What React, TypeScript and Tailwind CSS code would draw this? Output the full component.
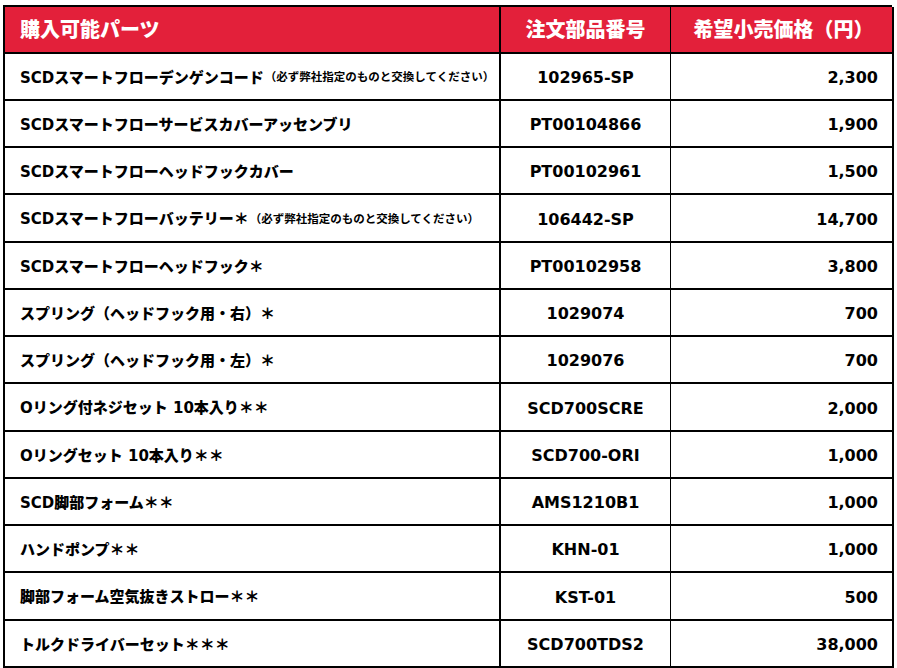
const parts: { name: string; note?: string; code: string; price: string }[] = [
  { name: 'SCDスマートフローデンゲンコード', note: '（必ず弊社指定のものと交換してください）', code: '102965-SP', price: '2,300' },
  { name: 'SCDスマートフローサービスカバーアッセンブリ', code: 'PT00104866', price: '1,900' },
  { name: 'SCDスマートフローヘッドフックカバー', code: 'PT00102961', price: '1,500' },
  { name: 'SCDスマートフローバッテリー＊', note: '（必ず弊社指定のものと交換してください）', code: '106442-SP', price: '14,700' },
  { name: 'SCDスマートフローヘッドフック＊', code: 'PT00102958', price: '3,800' },
  { name: 'スプリング（ヘッドフック用・右）＊', code: '1029074', price: '700' },
  { name: 'スプリング（ヘッドフック用・左）＊', code: '1029076', price: '700' },
  { name: 'Oリング付ネジセット 10本入り＊＊', code: 'SCD700SCRE', price: '2,000' },
  { name: 'Oリングセット 10本入り＊＊', code: 'SCD700-ORI', price: '1,000' },
  { name: 'SCD脚部フォーム＊＊', code: 'AMS1210B1', price: '1,000' },
  { name: 'ハンドポンプ＊＊', code: 'KHN-01', price: '1,000' },
  { name: '脚部フォーム空気抜きストロー＊＊', code: 'KST-01', price: '500' },
  { name: 'トルクドライバーセット＊＊＊', code: 'SCD700TDS2', price: '38,000' },
];

export default function App() {
  return (
    <div className="w-[897px] h-[668px] bg-white pt-[5px] pl-[3px] font-['DejaVu_Sans','Noto_Sans_CJK_JP',sans-serif] text-black">
      <div className="grid w-[889px] grid-cols-[496px_170px_223px] border-l-2 border-t-2 border-black">
        {/* Header */}
        <div className="flex h-[47px] items-center border-b-2 border-r-2 border-black bg-[#e3203a] pl-[15px] text-[20px] font-black text-white">
          購入可能パーツ
        </div>
        <div className="flex h-[47px] items-center justify-center border-b-2 border-r border-black bg-[#e3203a] text-[20px] font-black text-white">
          注文部品番号
        </div>
        <div className="flex h-[47px] items-center justify-center border-b-2 border-r-2 border-black bg-[#e3203a] pl-[4px] text-[20px] font-black text-white">
          希望小売価格（円）
        </div>

        {parts.map((p, i) => {
          const h = i % 4 === 3 ? 'h-[48px]' : 'h-[47px]';
          return (
            <div key={p.code} className="contents">
              <div className={`flex ${h} items-center whitespace-nowrap border-b-2 border-r-2 border-black pl-[15px] pt-[3px] text-[15px] font-black`}>
                <span>{p.name}</span>
                {p.note && <span className="ml-[1px] text-[11.5px] font-bold">{p.note}</span>}
              </div>
              <div className={`flex ${h} items-center justify-center border-b-2 border-r border-black pt-[3px] text-[16px] font-bold`}>
                {p.code}
              </div>
              <div className={`flex ${h} items-center justify-end border-b-2 border-r-2 border-black pr-[14px] pt-[3px] text-[16px] font-bold`}>
                {p.price}
              </div>
            </div>
          );
        })}
      </div>
    </div>
  );
}
